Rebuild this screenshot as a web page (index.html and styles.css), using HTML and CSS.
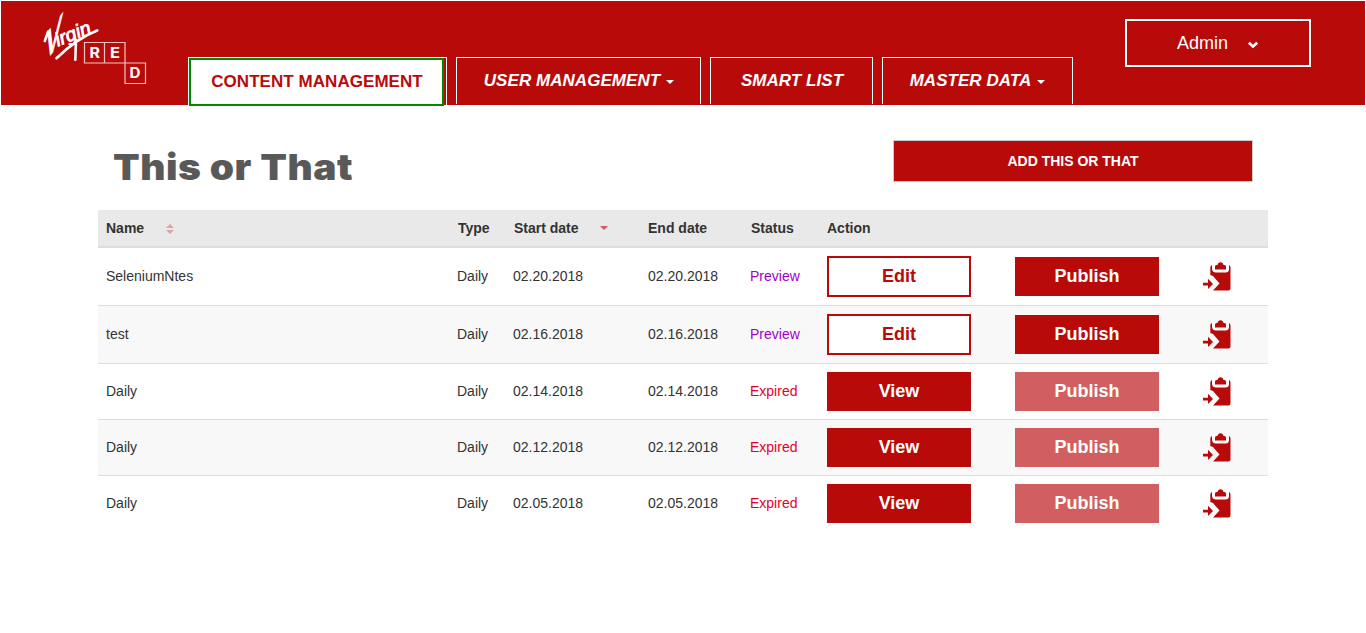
FILE: index.html
```
<!DOCTYPE html>
<html lang="en">
<head>
<meta charset="utf-8">
<title>This or That</title>
<link rel="stylesheet" href="styles.css">
</head>
<body>
<svg class="defs" width="0" height="0">
  <symbol id="clip" viewBox="0 0 28 30">
    <path d="M9 4Q7.300 4.500 7.300 6.500V14L10 15L16.500 22.500L10 29.500H25.500Q27.500 29.500 27.500 27.500V6.500Q27.500 4.500 26 4V8Q26 11.500 22.500 11.500H13Q9.500 11.500 9 8Z"/>
    <path d="M12 8.500V5.500Q12 4 13.500 4H14.500Q15 1.200 17.500 1.200Q20 1.200 20.500 4H21.500Q23 4 23 5.500V8.500Z"/>
    <path d="M0 21.700H5V17.800L10 22.900L5 28V24.400H0Z"/>
  </symbol>
</svg>
<header class="header">
  <svg class="logo" width="110" height="80" viewBox="40 8 110 80">
    <text class="script tall" transform="matrix(.556 -.70 -.13 1.11 44.300 62.600)" font-size="40">V</text>
    <text class="script slant" transform="translate(58 46.500) rotate(-22)" font-size="19" textLength="37" lengthAdjust="spacingAndGlyphs">irgin</text>
    <path class="flourish" d="M44.800 41L48.200 31.500M56.500 58.300C66 49 80 37 97.300 30.500M76 40L75.300 59.700"/>
    <path class="boxes" d="M84.500 42.500H125V63H84.500ZM104.500 42.500V63M125 63H145.500V83.500H125Z"/>
    <text class="tile" x="89.500" y="58" textLength="10.500" lengthAdjust="spacingAndGlyphs">R</text>
    <text class="tile" x="110" y="58" textLength="10" lengthAdjust="spacingAndGlyphs">E</text>
    <text class="tile" x="129.500" y="78" textLength="11" lengthAdjust="spacingAndGlyphs">D</text>
  </svg>
  <nav class="nav">
    <a class="tab active"><span>CONTENT MANAGEMENT</span></a>
    <a class="tab users">USER MANAGEMENT<i class="caret"></i></a>
    <a class="tab smart">SMART LIST</a>
    <a class="tab master">MASTER DATA<i class="caret"></i></a>
  </nav>
  <button class="admin">Admin
    <svg width="12" height="8" viewBox="0 0 12 8"><path d="M1.800 1.800L6 5.500L10.200 1.800" fill="none" stroke="#fff" stroke-width="2.800"/></svg>
  </button>
</header>
<main class="main">
  <div class="top">
    <h1 class="title">This or That</h1>
    <button class="add">ADD THIS OR THAT</button>
  </div>
  <div class="table">
    <div class="row head">
      <span>Name<svg class="sort" width="8" height="10" viewBox="0 0 8 10"><path d="M0 4L4 0L8 4ZM0 6H8L4 10Z" fill="#dfa3a3"/></svg></span>
      <span>Type</span>
      <span>Start date<svg class="sort desc" width="8" height="10" viewBox="0 0 8 10"><path d="M0 3H8L4 7Z" fill="#d05c5c"/></svg></span>
      <span class="flush">End date</span><span>Status</span><span class="flush">Action</span>
    </div>
    <div class="row first"><span>SeleniumNtes</span><span>Daily</span><span>02.20.2018</span><span>02.20.2018</span><span class="preview">Preview</span><button class="btn edit">Edit</button><button class="btn">Publish</button><svg class="clip"><use href="#clip"/></svg></div>
    <div class="row alt"><span>test</span><span>Daily</span><span>02.16.2018</span><span>02.16.2018</span><span class="preview">Preview</span><button class="btn edit">Edit</button><button class="btn">Publish</button><svg class="clip"><use href="#clip"/></svg></div>
    <div class="row"><span>Daily</span><span>Daily</span><span>02.14.2018</span><span>02.14.2018</span><span class="expired">Expired</span><button class="btn">View</button><button class="btn off">Publish</button><svg class="clip"><use href="#clip"/></svg></div>
    <div class="row alt"><span>Daily</span><span>Daily</span><span>02.12.2018</span><span>02.12.2018</span><span class="expired">Expired</span><button class="btn">View</button><button class="btn off">Publish</button><svg class="clip"><use href="#clip"/></svg></div>
    <div class="row"><span>Daily</span><span>Daily</span><span>02.05.2018</span><span>02.05.2018</span><span class="expired">Expired</span><button class="btn">View</button><button class="btn off">Publish</button><svg class="clip"><use href="#clip"/></svg></div>
  </div>
</main>
</body>
</html>
```
FILE: styles.css
```
* { box-sizing: border-box; }
body { margin: 0; font: 14px/20px "Liberation Sans", Arial, sans-serif; color: #333; background: #fff; }
.defs { position: absolute; }
button { font-family: inherit; padding: 0; border-radius: 0; }
.header { margin: 1px 1px 0; height: 104px; background: #b90a0a; display: flex; align-items: flex-start; }
.logo { margin: 7px 0 0 39px; flex: none; overflow: visible; }
.script { font-family: "Liberation Sans", sans-serif; fill: #fff; }
.tall { stroke: #fff; stroke-width: 1.8; }
.slant { font-style: italic; stroke: #fff; stroke-width: 0.8; }
.flourish { fill: none; stroke: #fff; stroke-width: 2.6; stroke-linecap: round; }
.boxes { fill: none; stroke: #f0c4c4; stroke-width: 1.2; }
.tile { font: 700 14px Inter, sans-serif; fill: #fff; }
.nav { display: flex; margin: 56px 0 0 38px; gap: 9px; }
.tab { height: 47px; border: 1px solid #fff; border-bottom: 0; color: #fff; font-weight: bold; font-style: italic; font-size: 17px; line-height: 45px; display: flex; justify-content: center; align-items: flex-start; letter-spacing: 0.05px; }
.active { width: 259px; height: 49px; font-style: normal; color: #b90a0a; justify-content: flex-start; }
.active span { width: 255px; height: 48px; padding-left: 1px; background: #fff; border: 2px solid #080; text-align: center; line-height: 43px; }
.users { width: 245px; padding-left: 1px; }
.smart { width: 163px; padding-left: 1px; }
.master { width: 191px; }
.caret { border: 4px solid transparent; border-top-color: #fff; border-bottom: 0; margin: 22px 0 0 6px; }
.admin { width: 186px; height: 48px; margin: 18px 54px 0 auto; border: 2px solid #fff; background: none; color: #fff; font-size: 18px; display: flex; align-items: center; justify-content: center; gap: 19px; }
.admin svg { margin-top: 3px; }
.main { padding: 35px 98px 0; }
.top { display: flex; justify-content: space-between; height: 70px; padding: 0 15px; }
.title { margin: 5px 0 0; font: 900 36px/44px Inter, sans-serif; color: #595959; letter-spacing: 0.5px; white-space: nowrap; transform: scaleX(1.08); transform-origin: left; }
.add { width: 360px; height: 42px; border: 1px solid #ccc; background: #b90a0a; color: #fff; font-size: 14px; font-weight: bold; }
.row { display: grid; grid-template-columns: 351px 56px 135px 102px 77px 188px 188px 28px; padding-left: 8px; height: 56px; border-top: 1px solid #ddd; align-items: center; }
.first { height: 57px; border-top: 0; }
.row > span { padding-bottom: 2px; }
.alt { background: #f8f8f8; }
.row.first + .alt { height: 58px; }
.head { height: 38px; background: #e9e9e9; border-top: 0; border-bottom: 2px solid #ddd; font-weight: bold; }
.row.head > span { padding: 0 0 0 1px; }
.row.head > span:first-child, .row.head > .flush { padding-left: 0; }
.sort { margin-left: 22px; vertical-align: -1px; }
.row .desc { vertical-align: 0; margin-left: 21px; }
.preview { color: #a000c8; }
.expired { color: #e2002d; }
.btn { width: 144px; height: 39px; border: 0; background: #b90a0a; color: #fff; font-size: 18px; font-weight: bold; }
.edit { height: 41px; border: 2px solid #b90a0a; background: #fff; color: #b90a0a; }
.off { background: #d15f61; }
.clip { width: 28px; height: 30px; margin-bottom: 2px; fill: #b90a0a; }
```
